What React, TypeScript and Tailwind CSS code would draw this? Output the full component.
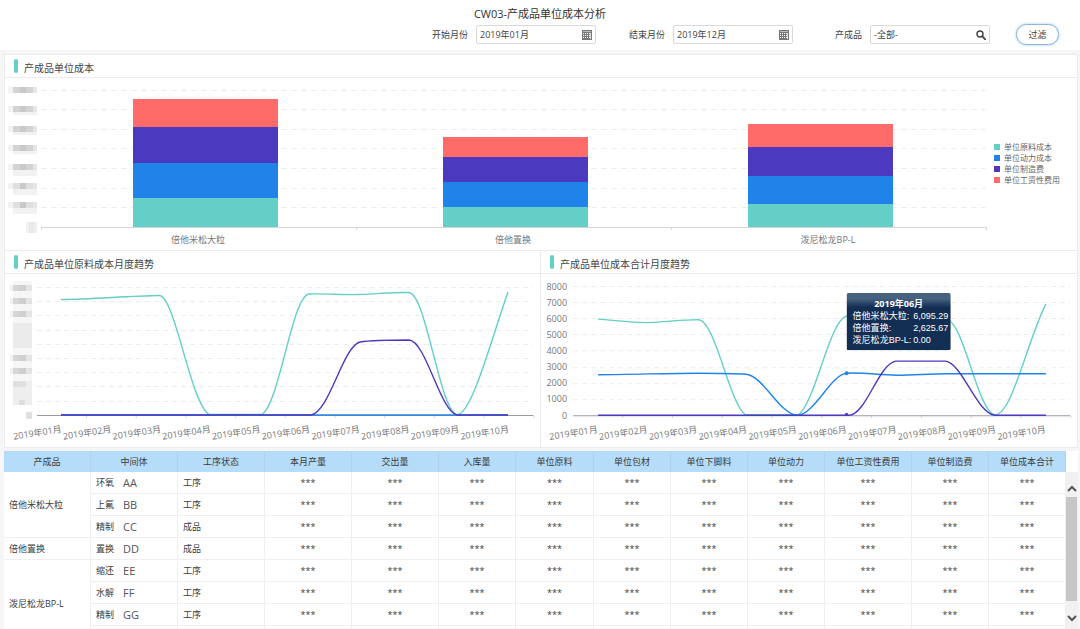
import React from "react";

const TEAL = "#63cfc6";
const BLUE = "#1f83ea";
const PURPLE = "#4b3abf";
const RED = "#ff6b68";

const MONTHS = ["01", "02", "03", "04", "05", "06", "07", "08", "09", "10"];

function CalendarIcon() {
  return (
    <svg viewBox="0 0 10 10" className="size-[10px]" aria-hidden="true" shapeRendering="crispEdges">
      <rect x="0" y="0" width="10" height="10" fill="#777" />
      <rect x="1" y="1" width="8" height="1" fill="#bbb" />
      {[3, 5, 7].map((y) =>
        [1, 3, 5, 7].map((x) => <rect key={`${x}-${y}`} x={x} y={y} width="1" height="1" fill="#fff" />)
      )}
      <rect x="8" y="3" width="1" height="6" fill="#ddd" />
    </svg>
  );
}

function SearchIcon() {
  return (
    <svg viewBox="0 0 10 10" className="size-[10px]" aria-hidden="true" fill="none" stroke="#444">
      <circle cx="4" cy="4" r="3" strokeWidth="1.4" />
      <path d="M6.2 6.2 L9.2 9.4" strokeWidth="1.8" strokeLinecap="round" />
    </svg>
  );
}

function Field({ id, label, value, icon }: { id: string; label: string; value: string; icon: React.ReactNode }) {
  return (
    <div className="flex items-center gap-2">
      <label htmlFor={id} className="w-9 text-right whitespace-nowrap">
        {label}
      </label>
      <div className="flex h-[19px] w-[120px] items-center rounded-xs border border-[#d9d9d9] bg-white pr-[3px] pl-[3px]">
        <input id={id} defaultValue={value} className="min-w-0 flex-1 bg-transparent outline-none" />
        <button type="button" aria-label={label}>
          {icon}
        </button>
      </div>
    </div>
  );
}

function PanelTitle({ children }: { children: React.ReactNode }) {
  return (
    <h2 className="flex h-[23px] items-center gap-[6px] border-b border-[#ebebeb] pl-[9px] text-[10px] leading-3 text-[#444]">
      <span className="h-[14px] w-1 rounded-xs bg-[#63cfc6]" />
      <span className="pt-[3px]">{children}</span>
    </h2>
  );
}

const BARS = [
  { name: "倍他米松大粒", x: 128, label: 193, stops: [21, 49, 85, 120, 149] },
  { name: "倍他置换", x: 438, label: 508, stops: [59, 79, 104, 129, 149] },
  { name: "泼尼松龙BP-L", x: 743, label: 823, stops: [46, 69, 98, 126, 149] },
];
const STACK = [RED, PURPLE, BLUE, TEAL];
const LEGEND = [
  { name: "单位原料成本", color: TEAL },
  { name: "单位动力成本", color: BLUE },
  { name: "单位制造费", color: PURPLE },
  { name: "单位工资性费用", color: RED },
];

function BarChart() {
  return (
    <svg viewBox="0 0 1072 172" className="block h-auto w-full" role="img" aria-label="产成品单位成本">
      {[12, 31, 51, 70, 90, 110, 129].map((y) => (
        <line key={y} x1="36" x2="981" y1={y + 0.5} y2={y + 0.5} stroke="#ededed" strokeDasharray="6 4" />
      ))}
      {[9, 28, 48, 67, 86, 105, 124].map((y, i) => (
        <g key={y} shapeRendering="crispEdges">
          <rect x="3" y={y} width="5" height="6" fill="#f3f3f3" />
          <rect x="8" y={y} width="20" height="6" fill={i > 4 ? "#dfdfdf" : "#d3d3d3"} />
          <rect x="15" y={y} width="6" height="6" fill="#c9c9c9" />
          <rect x="28" y={y} width="4" height="6" fill="#e6e6e6" />
          {i > 0 && <rect x="8" y={y + 6} width="24" height={i > 3 ? 6 : 3} fill="#f2f2f2" />}
        </g>
      ))}
      <rect x="21" y="144" width="11" height="11" fill="#f0f0f0" />
      <rect x="24" y="144" width="5" height="11" fill="#e9e9e9" />
      <path d="M36.5 152 V149.5 H981.5 V152 M351.5 149.5 V152 M666.5 149.5 V152" fill="none" stroke="#d5d5d5" />
      {BARS.map((bar) => (
        <g key={bar.name}>
          {STACK.map((fill, i) => (
            <rect key={fill} x={bar.x} y={bar.stops[i]} width="145" height={bar.stops[i + 1] - bar.stops[i]} fill={fill} />
          ))}
          <text x={bar.label} y="165" textAnchor="middle" fontSize="9" fill="#777">
            {bar.name}
          </text>
        </g>
      ))}
      {LEGEND.map((item, i) => (
        <g key={item.name}>
          <rect x="989" y={66 + i * 11} width="6" height="6" fill={item.color} />
          <text x="999" y={72 + i * 11} fontSize="8" fill="#666">
            {item.name}
          </text>
        </g>
      ))}
    </svg>
  );
}

type Series = { color: string; d: string };

function LineChart({
  label,
  grid,
  series,
  children,
}: {
  label: string;
  grid: number[];
  series: Series[];
  children?: React.ReactNode;
}) {
  return (
    <svg viewBox="0 0 535 173" className="block h-auto w-full" role="img" aria-label={label}>
      {grid.map((y) => (
        <line key={y} x1="32" x2="528" y1={y + 0.5} y2={y + 0.5} stroke="#ededed" strokeDasharray="5 4" />
      ))}
      {MONTHS.map((m, i) => (
        <line key={m} x1={81.5 + i * 49.7} x2={81.5 + i * 49.7} y1="141" y2="144" stroke="#d5d5d5" />
      ))}
      <line x1="32" x2="528" y1="141.5" y2="141.5" stroke="#9a9aa8" />
      {series.map((s) => (
        <path key={s.color} d={s.d} fill="none" stroke={s.color} strokeWidth="1.4" strokeLinejoin="round" />
      ))}
      {MONTHS.map((m, i) => {
        const x = 57 + i * 49.7;
        return (
          <text key={m} x={x} y="158" textAnchor="end" fontSize="9" fill="#777" transform={`rotate(-9 ${x} 158)`}>
            {`2019年${m}月`}
          </text>
        );
      })}
      {children}
    </svg>
  );
}

const MATERIAL_SERIES: Series[] = [
  {
    color: TEAL,
    d: "M56 25.5 C89 25 123 22 154 21.5 C170 21 185 128 204 140.5 H257 C275 128 287 22 304 20 C321 19.5 338 21 354 20.5 C373 20 387 18 404 18.5 C421 20 434 132 451 140.5 C466 144 486 66 503 18",
  },
  { color: BLUE, d: "M56 141 H503" },
  {
    color: PURPLE,
    d: "M56 141 H306 C324 139 338 72 355 68 C368 66 386 66 404 66 C421 67 435 137 452 141 H503",
  },
];

const TOTAL_SERIES: Series[] = [
  {
    color: TEAL,
    d: "M57 45 C73 46 90 49 107 48.5 C124 48 140 45.5 157 45.5 C174 46 188 130 204 140.5 H257 C274 128 288 46 305 42 C338 38 372 44 405 45 C422 48 436 138 453 140.5 C470 142 486 64 504 30",
  },
  {
    color: BLUE,
    d: "M57 100.5 C90 100.5 125 99 157 99 C174 99 190 99 205 100 C222 102 239 141 256 141 C273 140 289 101 305 99 C321 98 338 101 355 101 C372 101 388 99.5 405 99.5 H504",
  },
  {
    color: PURPLE,
    d: "M57 141 H308 C325 139 337 90 354 87 H404 C421 90 435 139 453 141 H504",
  },
];

const TOOLTIP = [
  ["倍他米松大粒:", "6,095.29"],
  ["倍他置换:", "2,625.67"],
  ["泼尼松龙BP-L:", "0.00"],
];

function MaterialChart() {
  return (
    <LineChart label="产成品单位原料成本月度趋势" grid={[13, 27, 41, 56, 70, 84, 98, 112, 127]} series={MATERIAL_SERIES}>
      <g shapeRendering="crispEdges">
        <rect x="8" y="7" width="19" height="124" fill="#f6f6f6" />
        <rect x="8" y="49" width="19" height="25" fill="#ebebeb" />
        <rect x="8" y="107" width="19" height="24" fill="#eeeeee" />
        {[11, 24, 37, 81, 94].map((y) => (
          <g key={y}>
            <rect x="5" y={y} width="3" height="6" fill="#f2f2f2" />
            <rect x="8" y={y} width="13" height="6" fill="#d6d6d6" />
            <rect x="14" y={y} width="7" height="6" fill="#cfcfcf" />
            <rect x="21" y={y} width="6" height="6" fill="#e4e4e4" />
          </g>
        ))}
        <rect x="8" y="107" width="13" height="6" fill="#e0e0e0" />
        <rect x="14" y="126" width="6" height="5" fill="#dddddd" />
        <rect x="21" y="138" width="6" height="7" fill="#e0e0e0" />
      </g>
    </LineChart>
  );
}

function TotalChart() {
  return (
    <LineChart label="产成品单位成本合计月度趋势" grid={[12, 28, 44, 60, 76, 93, 109, 125]} series={TOTAL_SERIES}>
      {[8000, 7000, 6000, 5000, 4000, 3000, 2000, 1000, 0].map((v, i) => (
        <text key={v} x="26" y={15.5 + i * 16.1} textAnchor="end" fontSize="9" fill="#777">
          {v}
        </text>
      ))}
      <circle cx="305" cy="99" r="2" fill={BLUE} />
      <circle cx="305" cy="140" r="1.6" fill={PURPLE} />
      <foreignObject x="305" y="19" width="104" height="57">
        <div className="h-full rounded-xs bg-linear-to-b from-[#47627f] from-10% to-[#122e52] to-25% px-[6px] pt-[5px] text-[9px] leading-3 text-white">
          <div className="text-center font-bold">2019年06月</div>
          <dl className="grid grid-cols-[auto_1fr] gap-x-[2px] whitespace-nowrap font-['Liberation_Sans','Noto_Sans_CJK_SC',sans-serif]">
            {TOOLTIP.map(([name, value]) => (
              <React.Fragment key={name}>
                <dt>{name}</dt>
                <dd>{value}</dd>
              </React.Fragment>
            ))}
          </dl>
        </div>
      </foreignObject>
    </LineChart>
  );
}

const COLUMNS = [
  { name: "产成品", width: "w-[87px]" },
  { name: "中间体", width: "w-[87px]" },
  { name: "工序状态", width: "w-[87px]" },
  { name: "本月产量", width: "w-[87px]" },
  { name: "交出量", width: "w-[87px]" },
  { name: "入库量", width: "w-[77px]" },
  { name: "单位原料", width: "w-[78px]" },
  { name: "单位包材", width: "w-[77px]" },
  { name: "单位下脚料", width: "w-[77px]" },
  { name: "单位动力", width: "w-[77px]" },
  { name: "单位工资性费用", width: "w-[87px]" },
  { name: "单位制造费", width: "w-[77px]" },
  { name: "单位成本合计", width: "w-[77px]" },
];

type Row = { product?: string; span?: number; step: string; code: string; state: string };

const ROWS: Row[] = [
  { product: "倍他米松大粒", span: 3, step: "环氧", code: "AA", state: "工序" },
  { step: "上氟", code: "BB", state: "工序" },
  { step: "精制", code: "CC", state: "成品" },
  { product: "倍他置换", span: 1, step: "置换", code: "DD", state: "成品" },
  { product: "泼尼松龙BP-L", span: 4, step: "缩还", code: "EE", state: "工序" },
  { step: "水解", code: "FF", state: "工序" },
  { step: "精制", code: "GG", state: "工序" },
  { step: "", code: "", state: "" },
];

function CostTable() {
  return (
    <table className="w-full table-fixed border-separate border-spacing-0 bg-white text-[9px] leading-3 text-[#3c3c3c]">
      <thead>
        <tr className="bg-[#b5dcf8]">
          {COLUMNS.map((c) => (
            <th key={c.name} scope="col" className={`${c.width} h-[21px] border-r border-[#b0d3ec] p-0 font-normal whitespace-nowrap`}>
              {c.name}
            </th>
          ))}
        </tr>
      </thead>
      <tbody>
        {ROWS.map((row, i) => (
          <tr key={i}>
            {row.product && (
              <td rowSpan={row.span} className="border-r border-b border-[#efefef] p-0 pl-[5px]">
                {row.product}
              </td>
            )}
            <td className="h-[22px] border-r border-b border-[#efefef] p-0 pl-[5px]">
              <div className="flex items-center gap-[9px]">
                <span>{row.step}</span>
                <span className="text-[11px] font-medium text-[#555]">{row.code}</span>
              </div>
            </td>
            <td className="h-[22px] border-r border-b border-[#efefef] p-0 pl-[5px]">{row.state}</td>
            {COLUMNS.slice(3).map((c) => (
              <td key={c.name} className="h-[22px] border-r border-b border-[#efefef] p-0 text-center">
                {row.step ? "***" : ""}
              </td>
            ))}
          </tr>
        ))}
      </tbody>
    </table>
  );
}

function ScrollBar() {
  return (
    <div className="flex w-3 flex-col bg-white pt-[21px]">
      <div className="flex min-h-0 flex-1 flex-col bg-[#f1f1f1]">
        <button type="button" aria-label="向上滚动" className="flex h-[25px] items-end justify-center pb-[5px]">
          <svg viewBox="0 0 10 7" className="h-[7px] w-[10px]" fill="none" stroke="#555" strokeWidth="2">
            <path d="M1 6 L5 2 L9 6" />
          </svg>
        </button>
        <div className="mr-px flex-1 bg-[#c6c6c6]" />
        <button type="button" aria-label="向下滚动" className="flex h-[28px] items-center justify-center pt-[6px]">
          <svg viewBox="0 0 10 7" className="h-[7px] w-[10px]" fill="none" stroke="#555" strokeWidth="2">
            <path d="M1 1 L5 5 L9 1" />
          </svg>
        </button>
      </div>
    </div>
  );
}

export default function App() {
  return (
    <div className="flex h-screen flex-col overflow-hidden bg-[#f6f6f6] font-['Open_Sans','Noto_Sans_CJK_SC',sans-serif] text-[9px] leading-3 text-[#444]">
      <header className="flex h-[50px] shrink-0 flex-col bg-white pt-[7px]">
        <h1 className="text-center text-[11px] leading-[14px] text-[#333]">CW03-产成品单位成本分析</h1>
        <form className="flex items-center justify-end gap-[33px] pt-[3px] pr-[21px]" onSubmit={(e) => e.preventDefault()}>
          <Field id="start" label="开始月份" value="2019年01月" icon={<CalendarIcon />} />
          <Field id="end" label="结束月份" value="2019年12月" icon={<CalendarIcon />} />
          <div className="flex items-center gap-[26px]">
            <Field id="product" label="产成品" value="-全部-" icon={<SearchIcon />} />
            <button
              type="submit"
              className="h-[21px] w-[43px] rounded-full border border-[#8fb4dc] bg-white shadow-[0_0_3px_#9cc8f2]"
            >
              过滤
            </button>
          </div>
        </form>
      </header>

      <main className="flex min-h-0 flex-1 flex-col gap-[3px] pt-1 pr-[2px] pl-1">
        <div className="shrink-0 border border-[#ebebeb] bg-white">
          <section>
            <PanelTitle>产成品单位成本</PanelTitle>
            <BarChart />
          </section>
          <div className="grid grid-cols-2 border-t border-[#ebebeb]">
            <section className="border-r border-[#ebebeb]">
              <PanelTitle>产成品单位原料成本月度趋势</PanelTitle>
              <MaterialChart />
            </section>
            <section>
              <PanelTitle>产成品单位成本合计月度趋势</PanelTitle>
              <TotalChart />
            </section>
          </div>
        </div>
        <section className="flex min-h-0 flex-1">
          <div className="min-w-0 flex-1 overflow-hidden">
            <CostTable />
          </div>
          <ScrollBar />
        </section>
      </main>
    </div>
  );
}
